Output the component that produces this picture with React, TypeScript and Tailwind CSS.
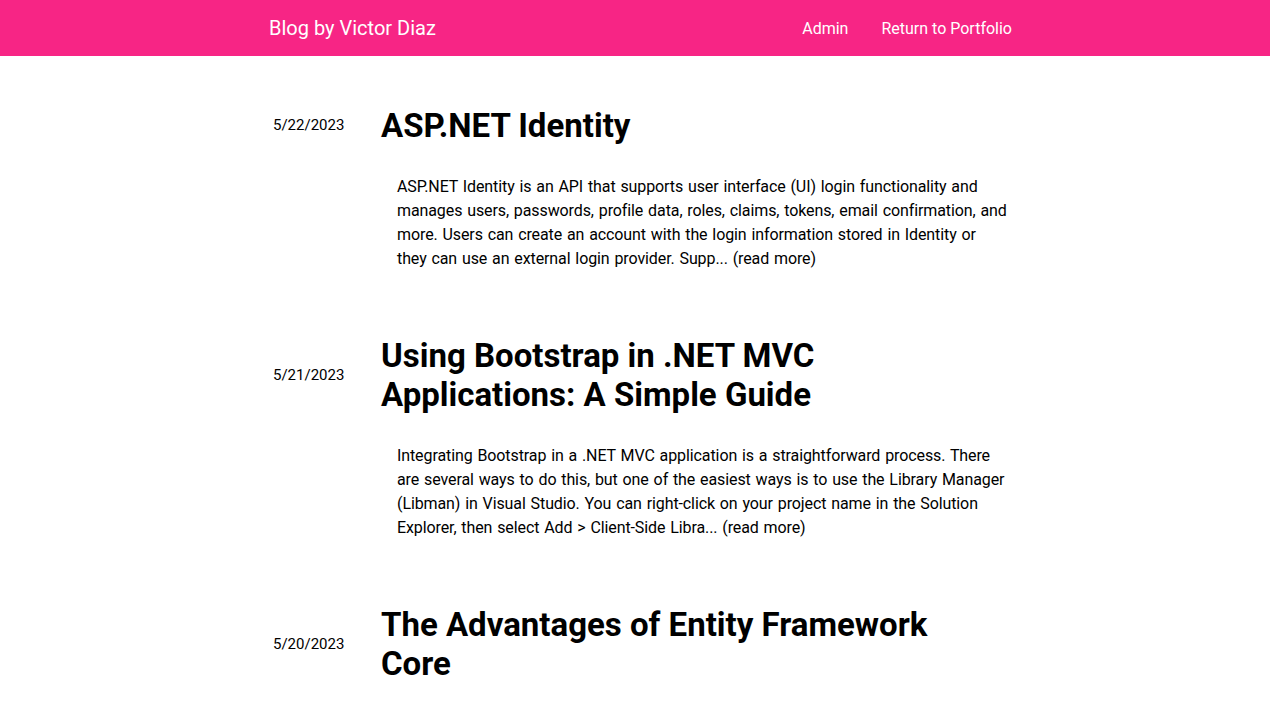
import React from "react";

const posts = [
  {
    date: "5/22/2023",
    title: "ASP.NET Identity",
    excerpt:
      "ASP.NET Identity is an API that supports user interface (UI) login functionality and manages users, passwords, profile data, roles, claims, tokens, email confirmation, and more. Users can create an account with the login information stored in Identity or they can use an external login provider. Supp...",
  },
  {
    date: "5/21/2023",
    title: "Using Bootstrap in .NET MVC Applications: A Simple Guide",
    excerpt:
      "Integrating Bootstrap in a .NET MVC application is a straightforward process. There are several ways to do this, but one of the easiest ways is to use the Library Manager (Libman) in Visual Studio. You can right-click on your project name in the Solution Explorer, then select Add > Client-Side Libra...",
  },
  {
    date: "5/20/2023",
    title: "The Advantages of Entity Framework Core",
    excerpt:
      "Entity Framework Core (EF Core) is a modern object-database mapper for .NET. It supports LINQ queries, change tracking, updates, and schema migrations. EF Core works with many databases, including SQL Database, SQLite, MySQL, PostgreSQL, and Azure Cosmos DB...",
  },
];

export default function App() {
  return (
    <div className="min-h-screen bg-white text-black font-['Roboto',sans-serif]">
      <header className="h-[56px] bg-[#f72585] text-white">
        <div className="ml-[269px] w-[743px] h-full flex items-center justify-between">
          <a className="text-[20px] leading-none">Blog by Victor Diaz</a>
          <nav className="mt-[2px] flex items-center gap-[33px] text-[16px]">
            <a>Admin</a>
            <a>Return to Portfolio</a>
          </nav>
        </div>
      </header>
      <main className="ml-[269px] pt-[50px] flex flex-col gap-[65px]">
        {posts.map((p) => (
          <article key={p.date}>
            <div className="flex items-center">
              <div className="w-[112px] pl-[4px] text-[15px]">{p.date}</div>
              <h2 className="w-[600px] text-[33px] leading-[39px] font-bold">{p.title}</h2>
            </div>
            <p className="mt-[30px] ml-[128px] w-[611px] text-[16px] leading-[24px] tracking-[-0.1px] [word-spacing:1px]">
              {p.excerpt} <a>(read more)</a>
            </p>
          </article>
        ))}
      </main>
    </div>
  );
}
